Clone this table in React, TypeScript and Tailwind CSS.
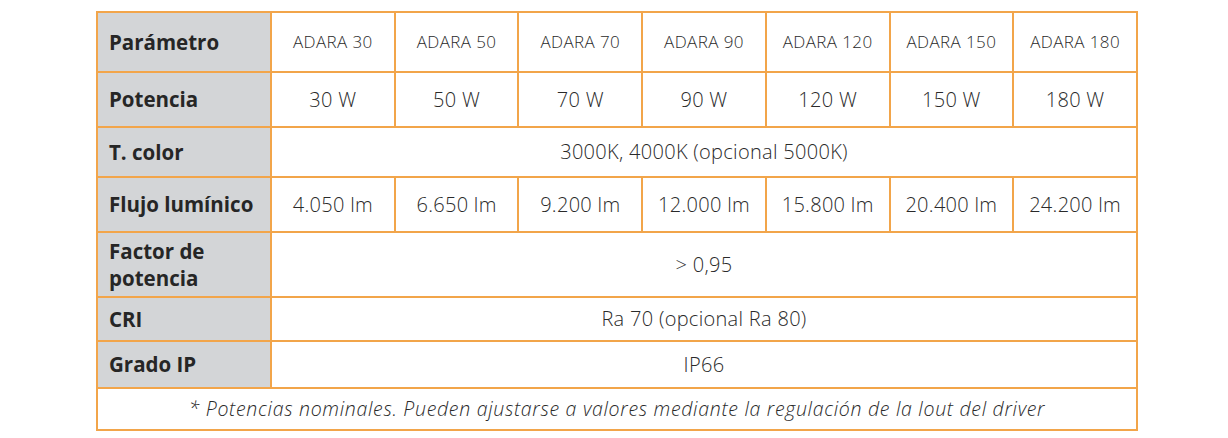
import React from 'react';

const models = ['ADARA 30', 'ADARA 50', 'ADARA 70', 'ADARA 90', 'ADARA 120', 'ADARA 150', 'ADARA 180'];
const power = ['30 W', '50 W', '70 W', '90 W', '120 W', '150 W', '180 W'];
const flux = ['4.050 lm', '6.650 lm', '9.200 lm', '12.000 lm', '15.800 lm', '20.400 lm', '24.200 lm'];

const th = 'border-2 border-[#f2a54a] bg-[#d3d5d7] text-left pl-[11px] pr-2 font-bold text-[20.5px] leading-[27px] text-[#262626]';
const cell = 'border-2 border-[#f2a54a] text-center font-light text-[#2a2a2a]';
const td = `${cell} text-[20px] tracking-[0.3px]`;

const App: React.FC = () => {
  return (
    <div className="w-[1228px] h-[438px] bg-white pt-[11px] pl-[96px]" style={{ fontFamily: '"Open Sans", "Liberation Sans", sans-serif' }}>
      <table className="w-[1042px] border-collapse table-fixed">
        <colgroup>
          <col className="w-[174px]" />
          {models.map((m) => (
            <col key={m} />
          ))}
        </colgroup>
        <tbody>
          <tr className="h-[60px]">
            <th className={th}>Parámetro</th>
            {models.map((m) => (
              <td key={m} className={`${cell} text-[17px] tracking-[0.4px]`}>{m}</td>
            ))}
          </tr>
          <tr className="h-[55px]">
            <th className={th}>Potencia</th>
            {power.map((p) => (
              <td key={p} className={td}>{p}</td>
            ))}
          </tr>
          <tr className="h-[50px]">
            <th className={th}>T. color</th>
            <td colSpan={7} className={td}>3000K, 4000K (opcional 5000K)</td>
          </tr>
          <tr className="h-[55px]">
            <th className={th}>Flujo lumínico</th>
            {flux.map((f) => (
              <td key={f} className={td}>{f}</td>
            ))}
          </tr>
          <tr className="h-[65px]">
            <th className={th}>Factor de<br />potencia</th>
            <td colSpan={7} className={td}>&gt; 0,95</td>
          </tr>
          <tr className="h-[44px]">
            <th className={th}>CRI</th>
            <td colSpan={7} className={td}>Ra 70 (opcional Ra 80)</td>
          </tr>
          <tr className="h-[47px]">
            <th className={th}>Grado IP</th>
            <td colSpan={7} className={td}>IP66</td>
          </tr>
          <tr className="h-[42px]">
            <td colSpan={8} className={`${cell} italic text-[19.5px] tracking-[0.7px]`}>
              * Potencias nominales. Pueden ajustarse a valores mediante la regulación de la lout del driver
            </td>
          </tr>
        </tbody>
      </table>
    </div>
  );
};

export default App;
